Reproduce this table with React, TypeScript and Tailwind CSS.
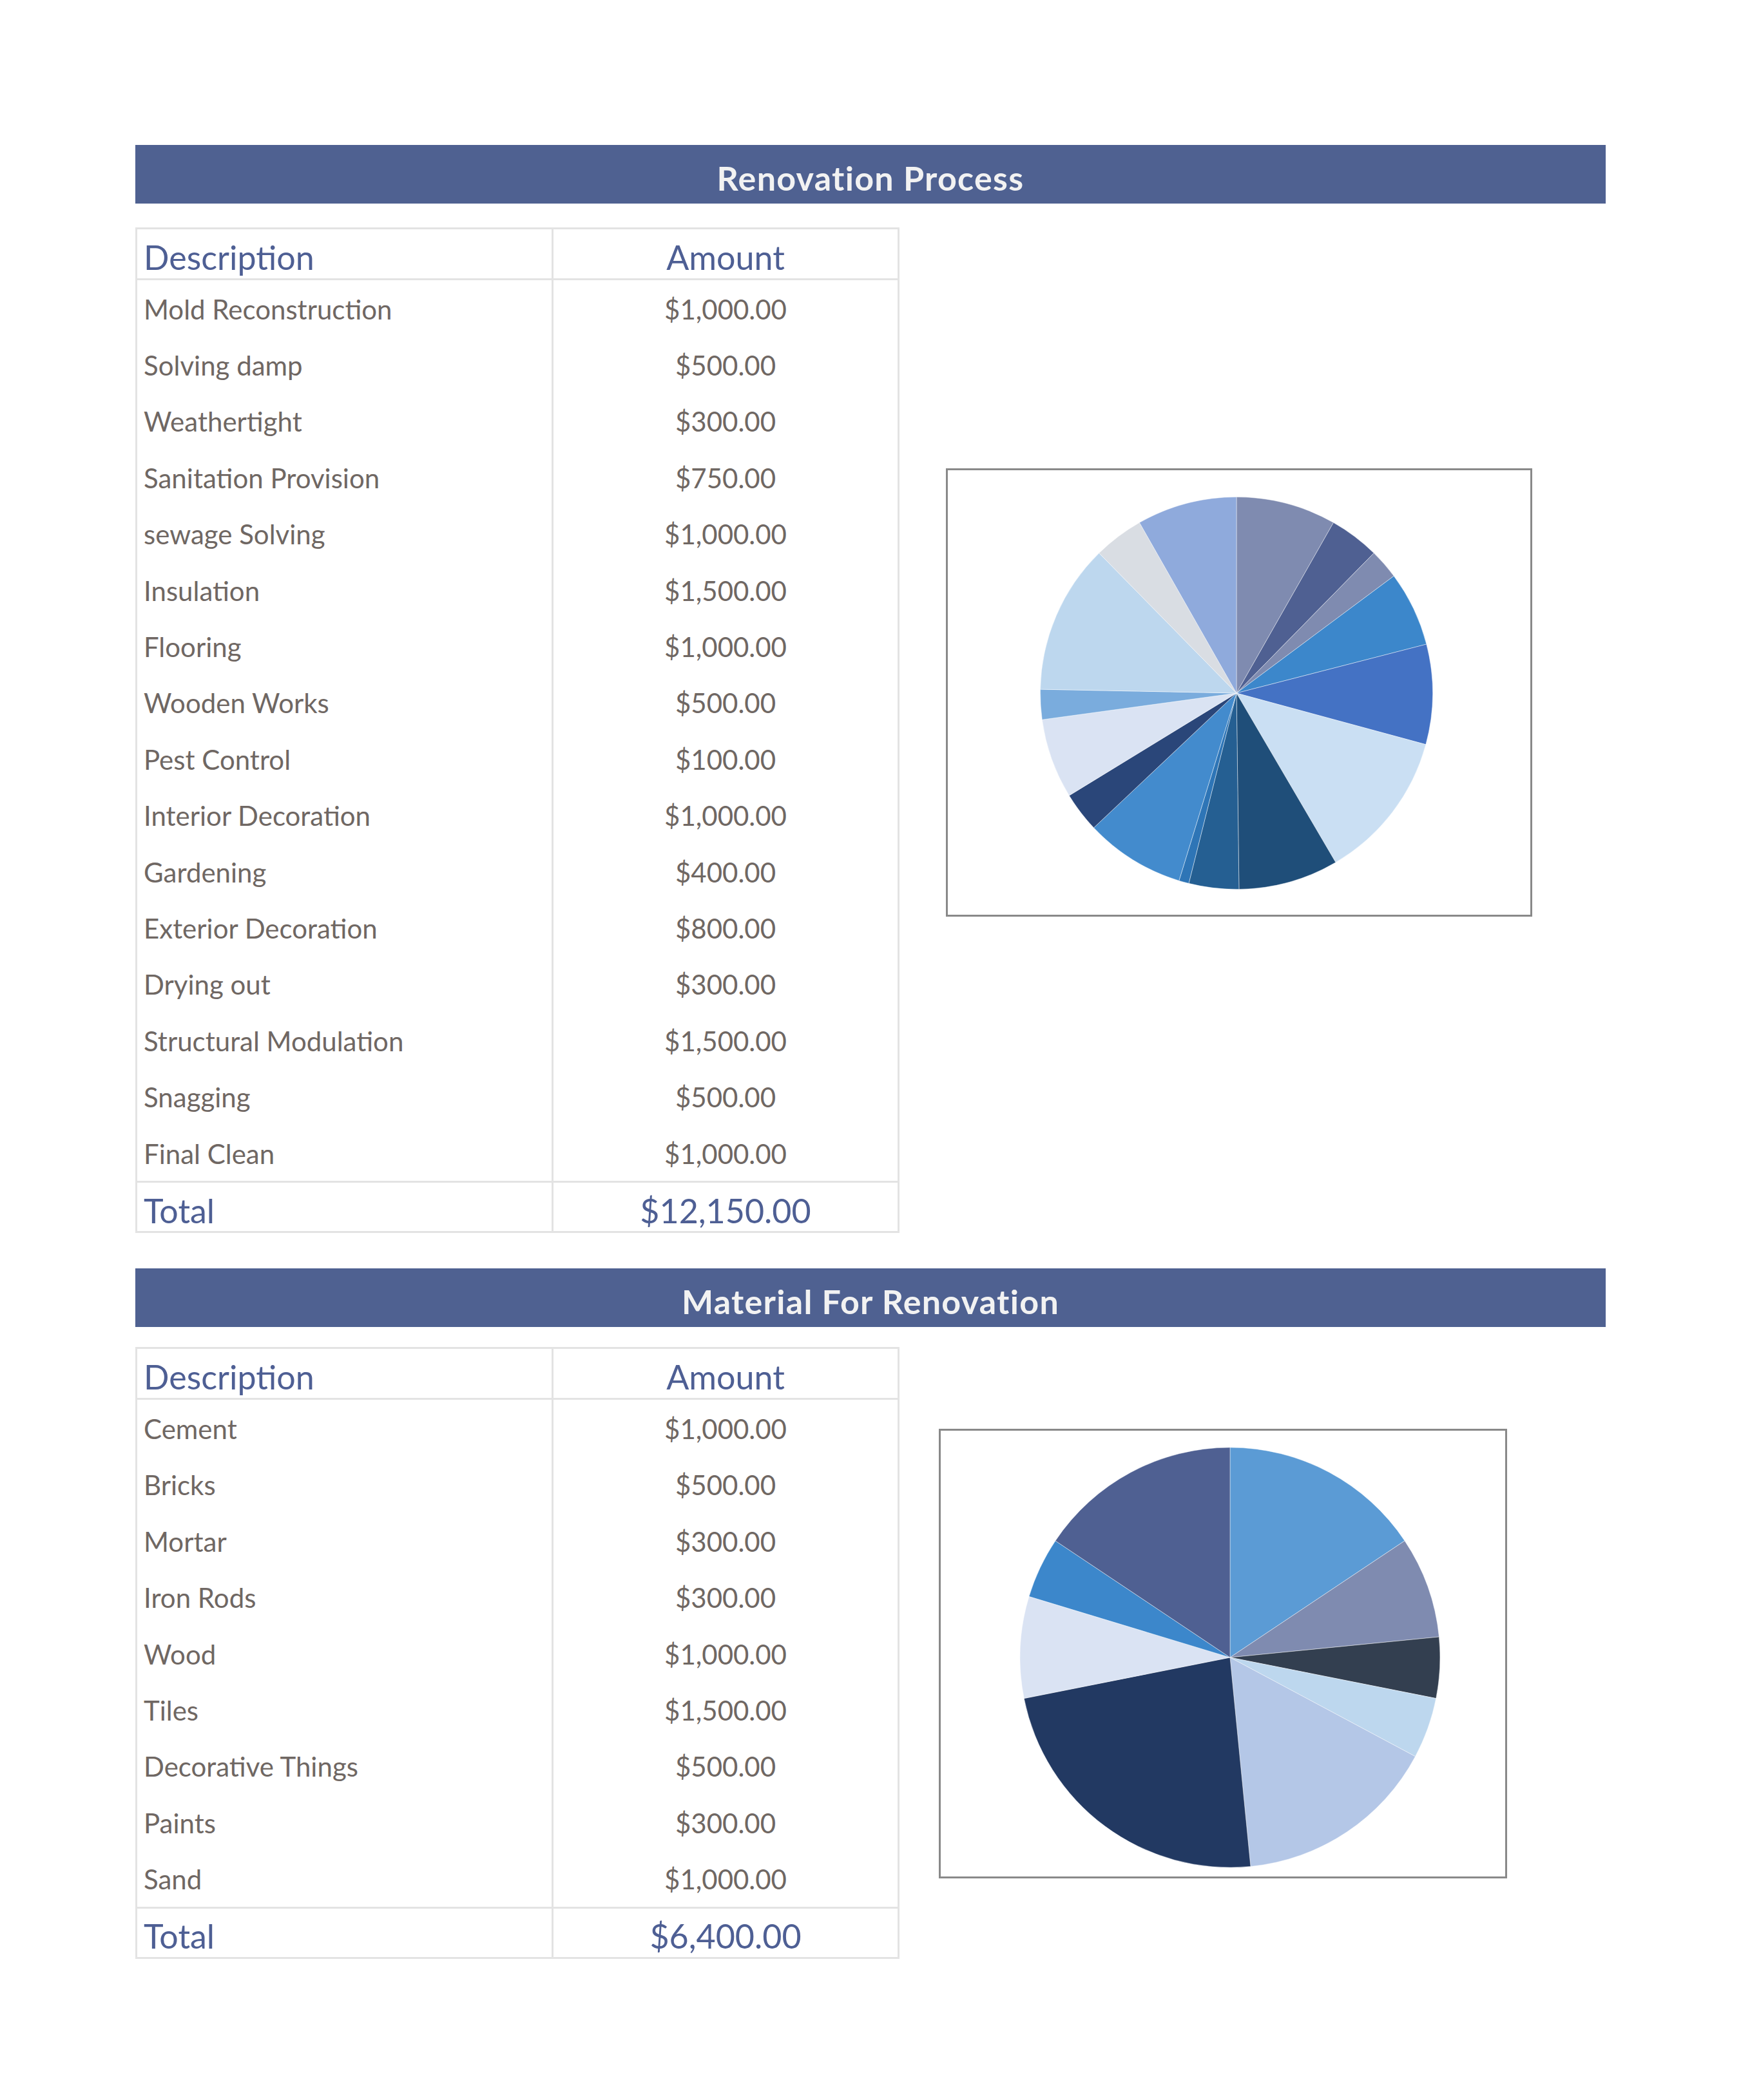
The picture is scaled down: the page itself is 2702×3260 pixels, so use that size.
import React from "react";

type Item = { name: string; amount: string; value: number };

const processItems: Item[] = [
  { name: "Mold Reconstruction", amount: "$1,000.00", value: 1000 },
  { name: "Solving damp", amount: "$500.00", value: 500 },
  { name: "Weathertight", amount: "$300.00", value: 300 },
  { name: "Sanitation Provision", amount: "$750.00", value: 750 },
  { name: "sewage Solving", amount: "$1,000.00", value: 1000 },
  { name: "Insulation", amount: "$1,500.00", value: 1500 },
  { name: "Flooring", amount: "$1,000.00", value: 1000 },
  { name: "Wooden Works", amount: "$500.00", value: 500 },
  { name: "Pest Control", amount: "$100.00", value: 100 },
  { name: "Interior Decoration", amount: "$1,000.00", value: 1000 },
  { name: "Gardening", amount: "$400.00", value: 400 },
  { name: "Exterior Decoration", amount: "$800.00", value: 800 },
  { name: "Drying out", amount: "$300.00", value: 300 },
  { name: "Structural Modulation", amount: "$1,500.00", value: 1500 },
  { name: "Snagging", amount: "$500.00", value: 500 },
  { name: "Final Clean", amount: "$1,000.00", value: 1000 },
];

const materialItems: Item[] = [
  { name: "Cement", amount: "$1,000.00", value: 1000 },
  { name: "Bricks", amount: "$500.00", value: 500 },
  { name: "Mortar", amount: "$300.00", value: 300 },
  { name: "Iron Rods", amount: "$300.00", value: 300 },
  { name: "Wood", amount: "$1,000.00", value: 1000 },
  { name: "Tiles", amount: "$1,500.00", value: 1500 },
  { name: "Decorative Things", amount: "$500.00", value: 500 },
  { name: "Paints", amount: "$300.00", value: 300 },
  { name: "Sand", amount: "$1,000.00", value: 1000 },
];

const processColors = [
  "#7f8bb0", "#4f6092", "#7f8bb0", "#3c87cb", "#4472c4", "#cadff3", "#1f4e79", "#255f92",
  "#2e75b6", "#438bcd", "#2a4679", "#dae3f3", "#7aacdd", "#bdd7ee", "#d9dde3", "#8faadc",
];

const materialColors = [
  "#5b9bd5", "#7f8bb0", "#333f50", "#bdd7ee", "#b4c7e7", "#223962", "#dae3f3", "#3c87cb", "#4f6092",
];

// slices start at 12 o'clock and run clockwise, like the spreadsheet chart
function Pie({ values, colors, width, height, cx, cy, r }: {
  values: number[]; colors: string[]; width: number; height: number; cx: number; cy: number; r: number;
}) {
  const total = values.reduce((a, b) => a + b, 0);
  let start = 0;
  const point = (a: number) => [cx + r * Math.sin(a), cy - r * Math.cos(a)];

  return (
    <svg width={width} height={height} viewBox={`0 0 ${width} ${height}`}>
      {values.map((v, i) => {
        const sweep = (v / total) * Math.PI * 2;
        const [x1, y1] = point(start);
        const [x2, y2] = point(start + sweep);
        const large = sweep > Math.PI ? 1 : 0;
        start += sweep;
        return (
          <path
            key={i}
            d={`M ${cx} ${cy} L ${x1} ${y1} A ${r} ${r} 0 ${large} 1 ${x2} ${y2} Z`}
            fill={colors[i]}
            stroke="#ffffff"
            strokeOpacity={0.45}
            strokeWidth={1}
          />
        );
      })}
    </svg>
  );
}

function CostTable({ items, total }: { items: Item[]; total: string }) {
  return (
    <div className="w-[1186px] shrink-0 border-[3px] border-[#e3e3e3]">
      {/* header */}
      <div className="flex h-[79px] border-b-[3px] border-[#e3e3e3] text-[52px] leading-none text-[#4e5f94]">
        <div className="flex w-[646px] items-center border-r-[3px] border-[#e3e3e3] pl-[10px] pt-[10px]">Description</div>
        <div className="flex flex-1 items-center justify-center pt-[10px]">Amount</div>
      </div>

      {/* body: two columns so the divider runs unbroken */}
      <div className="flex text-[42px] leading-none text-[#6f6763]">
        <div className="w-[646px] border-r-[3px] border-[#e3e3e3]">
          {items.map((item) => (
            <div key={item.name} className="flex h-[87.4px] items-center pl-[10px] pt-[2px]">
              {item.name}
            </div>
          ))}
        </div>
        <div className="flex-1">
          {items.map((item) => (
            <div key={item.name} className="flex h-[87.4px] items-center justify-center pt-[2px]">
              {item.amount}
            </div>
          ))}
        </div>
      </div>

      <div className="flex h-[78px] border-t-[3px] border-[#e3e3e3] text-[52px] leading-none text-[#4e5f94]">
        <div className="flex w-[646px] items-center border-r-[3px] border-[#e3e3e3] pl-[10px] pt-[10px]">Total</div>
        <div className="flex flex-1 items-center justify-center pt-[10px]">{total}</div>
      </div>
    </div>
  );
}

function TitleBar({ children }: { children: React.ReactNode }) {
  return (
    <div className="flex h-[91px] items-center justify-center bg-[#4f6191] pt-[10px] text-[52px] font-bold leading-none tracking-[1.3px] text-[#f2f2f2]">
      {children}
    </div>
  );
}

export default function App() {
  return (
    <div className="min-h-[3260px] bg-white pl-[210px] pt-[225px] font-['Lato',sans-serif]">
      <div className="w-[2282px]">
        <TitleBar>Renovation Process</TitleBar>

        <div className="mt-[37px] flex items-start">
          <CostTable items={processItems} total="$12,150.00" />
          <div className="ml-[72px] mt-[374px] border-[3px] border-[#898989]">
            <Pie
              values={processItems.map((i) => i.value)}
              colors={processColors}
              width={904}
              height={690}
              cx={448}
              cy={346}
              r={304.5}
            />
          </div>
        </div>

        <div className="mt-[55px]">
          <TitleBar>Material For Renovation</TitleBar>
        </div>

        <div className="mt-[31px] flex items-start">
          <CostTable items={materialItems} total="$6,400.00" />
          <div className="ml-[61px] mt-[127px] border-[3px] border-[#898989]">
            <Pie
              values={materialItems.map((i) => i.value)}
              colors={materialColors}
              width={876}
              height={692}
              cx={449}
              cy={352}
              r={326}
            />
          </div>
        </div>
      </div>
    </div>
  );
}
